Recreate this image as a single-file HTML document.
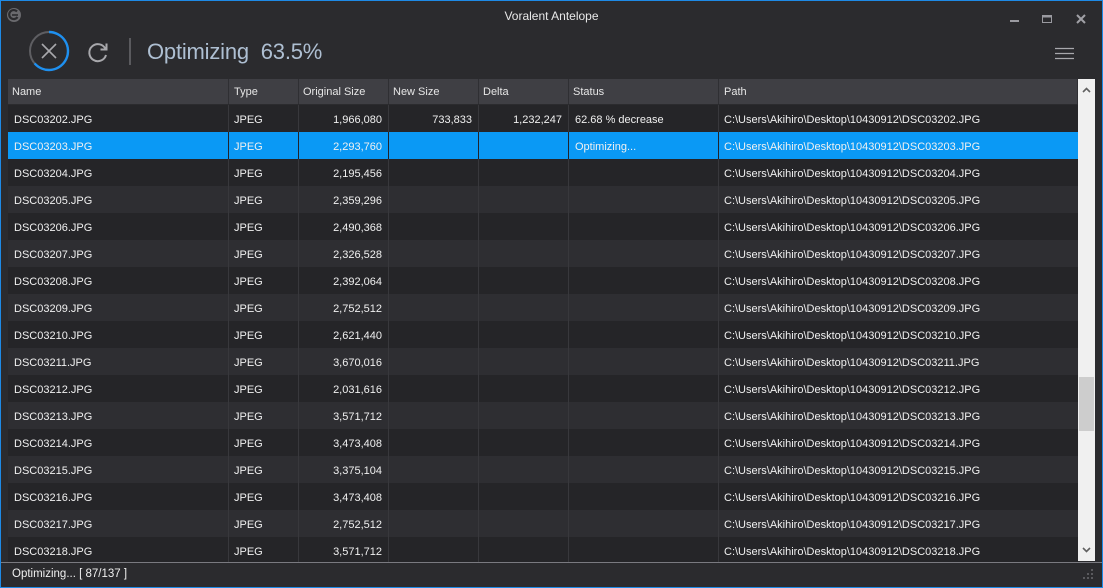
<!DOCTYPE html>
<html><head><meta charset="utf-8"><style>
*{margin:0;padding:0;box-sizing:border-box}
body{width:1103px;height:588px;background:#2b2b2e;font-family:"Liberation Sans",sans-serif;color:#f0f0f0;font-size:11px;position:relative;overflow:hidden}
#frame{position:absolute;inset:0;border:1px solid #1e8ae6;pointer-events:none;z-index:10}
.title{position:absolute;top:9px;left:0;width:1103px;text-align:center;font-size:12px;color:#e8e8e8}
.big{position:absolute;left:147px;top:39px;font-size:22px;color:#aebfd2;letter-spacing:-0.2px}
.vsep{position:absolute;left:129px;top:38px;width:2px;height:27px;background:#5a5a5e}
.hdr{position:absolute;left:8px;top:79px;width:1070px;height:25px;background:#3f3f44}
.row{position:absolute;left:8px;width:1070px;height:27px}
.c{position:absolute;top:0;height:100%;line-height:31px;white-space:nowrap;border-right:1px solid #2b2b2e}
.hdr .c{line-height:26px;border-right:1px solid #2f2f33;color:#e6e6e6}
.r{text-align:right;padding-right:6px}
.c1{left:0;width:221px;padding-left:6px}.c2{left:221px;width:70px;padding-left:5px}.c3{left:291px;width:90px}.c4{left:381px;width:90px}.c5{left:471px;width:90px}.c6{left:561px;width:150px;padding-left:6px}.c7{left:711px;width:359px;padding-left:5px;border-right:none}
.hdr .c1{padding-left:4px}.hdr .c3,.hdr .c4,.hdr .c5{text-align:left;padding-left:4px}.hdr .c6{padding-left:4px}
.d{background:#252528}.l{background:#2e2e32}.s{background:#0a99f5}
.row.d .c,.row.l .c{border-right-color:#38383c}
.row.s .c{border-right-color:#22232a}
.sb{position:absolute;left:1078px;top:79px;width:17px;height:482px;background:#f0f0f0}
.thumb{position:absolute;left:1px;top:298px;width:15px;height:54px;background:#cdcdcd}
.status{position:absolute;left:0;top:562px;width:1103px;height:26px;border-top:1px solid #7a7a80;background:#2b2b2e;padding-left:12px;line-height:22px;font-size:11.5px}
</style></head><body>
<div id="frame"></div>
<svg style="position:absolute;left:6px;top:7px" width="16" height="16" viewBox="0 0 16 16"><circle cx="8" cy="8" r="7" fill="#6a6a6e"/><path d="M11 4.5 A4.5 4.5 0 1 0 11.5 10" stroke="#2b2b2e" stroke-width="2.2" fill="none"/><path d="M6 8 H12" stroke="#2b2b2e" stroke-width="1.6"/></svg>
<div class="title">Voralent Antelope</div>
<svg style="position:absolute;left:1005px;top:12px" width="90" height="14"><rect x="5" y="8" width="9" height="2" fill="#9a9aa0"/><rect x="37.5" y="3.5" width="9" height="7" fill="none" stroke="#9a9aa0"/><rect x="37" y="3" width="10" height="2.5" fill="#9a9aa0"/><path d="M72 3 L80 11 M80 3 L72 11" stroke="#a0a0a6" stroke-width="2"/></svg>
<svg style="position:absolute;left:28px;top:30px" width="42" height="42" viewBox="0 0 42 42">
<circle cx="21" cy="21" r="19" stroke="#5e5e62" stroke-width="2" fill="none"/>
<path d="M21 2 A19 19 0 1 1 6.6 33.4" stroke="#1e90f0" stroke-width="2.4" fill="none"/>
<path d="M14 14 L28 28 M28 14 L14 28" stroke="#a8a8ac" stroke-width="1.6"/></svg>
<svg style="position:absolute;left:86px;top:40px" width="24" height="24" viewBox="0 0 24 24"><path d="M19.5 9 A8.5 8.5 0 1 0 20 15" stroke="#a8a8ac" stroke-width="2" fill="none"/><path d="M20.5 3.5 V9.5 H14.5" stroke="#a8a8ac" stroke-width="2" fill="none"/></svg>
<div class="vsep"></div>
<div class="big">Optimizing&nbsp;&nbsp;63.5%</div>
<svg style="position:absolute;left:1055px;top:47px" width="20" height="14"><path d="M0 1.5H19M0 6.5H19M0 11.5H19" stroke="#a8a8ac" stroke-width="1.2"/></svg>
<div class="hdr"><div class="c c1">Name</div><div class="c c2">Type</div><div class="c c3">Original Size</div><div class="c c4">New Size</div><div class="c c5">Delta</div><div class="c c6">Status</div><div class="c c7">Path</div></div>
<div class="row d" style="top:105px"><div class="c c1">DSC03202.JPG</div><div class="c c2">JPEG</div><div class="c c3 r">1,966,080</div><div class="c c4 r">733,833</div><div class="c c5 r">1,232,247</div><div class="c c6">62.68 % decrease</div><div class="c c7">C:\Users\Akihiro\Desktop\10430912\DSC03202.JPG</div></div>
<div class="row s" style="top:132px"><div class="c c1">DSC03203.JPG</div><div class="c c2">JPEG</div><div class="c c3 r">2,293,760</div><div class="c c4"></div><div class="c c5"></div><div class="c c6">Optimizing...</div><div class="c c7">C:\Users\Akihiro\Desktop\10430912\DSC03203.JPG</div></div>
<div class="row d" style="top:159px"><div class="c c1">DSC03204.JPG</div><div class="c c2">JPEG</div><div class="c c3 r">2,195,456</div><div class="c c4"></div><div class="c c5"></div><div class="c c6"></div><div class="c c7">C:\Users\Akihiro\Desktop\10430912\DSC03204.JPG</div></div>
<div class="row l" style="top:186px"><div class="c c1">DSC03205.JPG</div><div class="c c2">JPEG</div><div class="c c3 r">2,359,296</div><div class="c c4"></div><div class="c c5"></div><div class="c c6"></div><div class="c c7">C:\Users\Akihiro\Desktop\10430912\DSC03205.JPG</div></div>
<div class="row d" style="top:213px"><div class="c c1">DSC03206.JPG</div><div class="c c2">JPEG</div><div class="c c3 r">2,490,368</div><div class="c c4"></div><div class="c c5"></div><div class="c c6"></div><div class="c c7">C:\Users\Akihiro\Desktop\10430912\DSC03206.JPG</div></div>
<div class="row l" style="top:240px"><div class="c c1">DSC03207.JPG</div><div class="c c2">JPEG</div><div class="c c3 r">2,326,528</div><div class="c c4"></div><div class="c c5"></div><div class="c c6"></div><div class="c c7">C:\Users\Akihiro\Desktop\10430912\DSC03207.JPG</div></div>
<div class="row d" style="top:267px"><div class="c c1">DSC03208.JPG</div><div class="c c2">JPEG</div><div class="c c3 r">2,392,064</div><div class="c c4"></div><div class="c c5"></div><div class="c c6"></div><div class="c c7">C:\Users\Akihiro\Desktop\10430912\DSC03208.JPG</div></div>
<div class="row l" style="top:294px"><div class="c c1">DSC03209.JPG</div><div class="c c2">JPEG</div><div class="c c3 r">2,752,512</div><div class="c c4"></div><div class="c c5"></div><div class="c c6"></div><div class="c c7">C:\Users\Akihiro\Desktop\10430912\DSC03209.JPG</div></div>
<div class="row d" style="top:321px"><div class="c c1">DSC03210.JPG</div><div class="c c2">JPEG</div><div class="c c3 r">2,621,440</div><div class="c c4"></div><div class="c c5"></div><div class="c c6"></div><div class="c c7">C:\Users\Akihiro\Desktop\10430912\DSC03210.JPG</div></div>
<div class="row l" style="top:348px"><div class="c c1">DSC03211.JPG</div><div class="c c2">JPEG</div><div class="c c3 r">3,670,016</div><div class="c c4"></div><div class="c c5"></div><div class="c c6"></div><div class="c c7">C:\Users\Akihiro\Desktop\10430912\DSC03211.JPG</div></div>
<div class="row d" style="top:375px"><div class="c c1">DSC03212.JPG</div><div class="c c2">JPEG</div><div class="c c3 r">2,031,616</div><div class="c c4"></div><div class="c c5"></div><div class="c c6"></div><div class="c c7">C:\Users\Akihiro\Desktop\10430912\DSC03212.JPG</div></div>
<div class="row l" style="top:402px"><div class="c c1">DSC03213.JPG</div><div class="c c2">JPEG</div><div class="c c3 r">3,571,712</div><div class="c c4"></div><div class="c c5"></div><div class="c c6"></div><div class="c c7">C:\Users\Akihiro\Desktop\10430912\DSC03213.JPG</div></div>
<div class="row d" style="top:429px"><div class="c c1">DSC03214.JPG</div><div class="c c2">JPEG</div><div class="c c3 r">3,473,408</div><div class="c c4"></div><div class="c c5"></div><div class="c c6"></div><div class="c c7">C:\Users\Akihiro\Desktop\10430912\DSC03214.JPG</div></div>
<div class="row l" style="top:456px"><div class="c c1">DSC03215.JPG</div><div class="c c2">JPEG</div><div class="c c3 r">3,375,104</div><div class="c c4"></div><div class="c c5"></div><div class="c c6"></div><div class="c c7">C:\Users\Akihiro\Desktop\10430912\DSC03215.JPG</div></div>
<div class="row d" style="top:483px"><div class="c c1">DSC03216.JPG</div><div class="c c2">JPEG</div><div class="c c3 r">3,473,408</div><div class="c c4"></div><div class="c c5"></div><div class="c c6"></div><div class="c c7">C:\Users\Akihiro\Desktop\10430912\DSC03216.JPG</div></div>
<div class="row l" style="top:510px"><div class="c c1">DSC03217.JPG</div><div class="c c2">JPEG</div><div class="c c3 r">2,752,512</div><div class="c c4"></div><div class="c c5"></div><div class="c c6"></div><div class="c c7">C:\Users\Akihiro\Desktop\10430912\DSC03217.JPG</div></div>
<div class="row d" style="top:537px;height:25px"><div class="c c1">DSC03218.JPG</div><div class="c c2">JPEG</div><div class="c c3 r">3,571,712</div><div class="c c4"></div><div class="c c5"></div><div class="c c6"></div><div class="c c7">C:\Users\Akihiro\Desktop\10430912\DSC03218.JPG</div></div>
<div class="sb"><svg style="position:absolute;left:4px;top:8px" width="9" height="6"><path d="M1 5 L4.5 1.5 L8 5" stroke="#606060" stroke-width="1.6" fill="none"/></svg><div class="thumb"></div><svg style="position:absolute;left:4px;top:468px" width="9" height="6"><path d="M1 1 L4.5 4.5 L8 1" stroke="#606060" stroke-width="1.6" fill="none"/></svg></div>
<div class="status">Optimizing... [ 87/137 ]</div>
<svg style="position:absolute;left:1083px;top:569px" width="12" height="12"><g fill="#5a5a5e"><rect x="8" y="0" width="2" height="2"/><rect x="4" y="4" width="2" height="2"/><rect x="8" y="4" width="2" height="2"/><rect x="0" y="8" width="2" height="2"/><rect x="4" y="8" width="2" height="2"/><rect x="8" y="8" width="2" height="2"/></g></svg>
</body></html>
